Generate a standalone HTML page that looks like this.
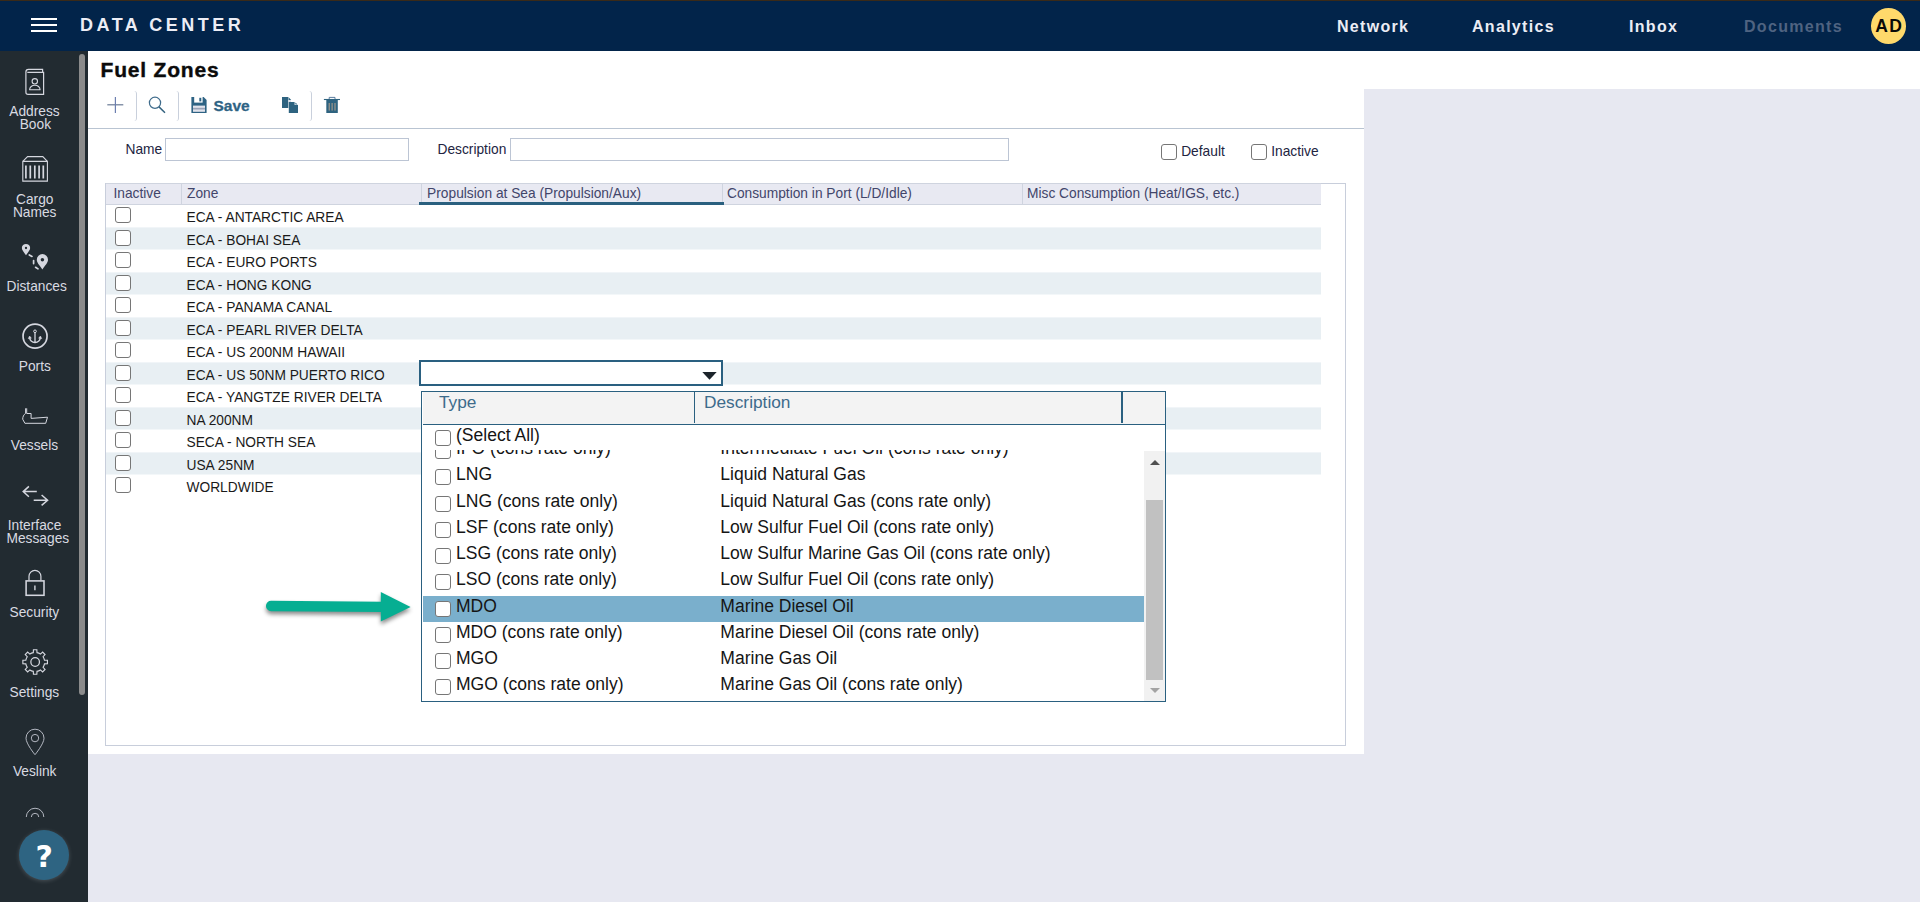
<!DOCTYPE html>
<html lang="en">
<head>
<meta charset="utf-8">
<title>Fuel Zones - Data Center</title>
<style>
*{box-sizing:border-box;margin:0;padding:0}
html,body{width:1920px;height:902px;overflow:hidden}
body{position:relative;background:#e7e8f1;font-family:"Liberation Sans",Arial,sans-serif;font-size:14px;color:#1b1b1b}
.abs{position:absolute}
#topline{left:0;top:0;width:1920px;height:1px;background:#3a2a18}
#topbar{left:0;top:1px;width:1920px;height:50px;background:#02244a}
#burger i{position:absolute;left:31px;width:26px;height:2px;background:#fff;display:block}
#brand{left:80px;top:13px;font-size:18px;font-weight:bold;color:#ecedf5;letter-spacing:3.5px;line-height:22px;white-space:nowrap}
.nav{top:16px;font-size:16px;font-weight:bold;color:#ecedf5;letter-spacing:1.3px;line-height:20px;white-space:nowrap}
#avatar{left:1870.7px;top:6.9px;width:35.6px;height:36.2px;border-radius:50%;background:#ffd96b;color:#0a0a0a;font-size:17.5px;font-weight:bold;text-align:center;line-height:36.6px;letter-spacing:1.3px;padding-left:1.5px}
#sidebar{left:0;top:51px;width:88px;height:851px;background:#222b31;overflow:hidden}
#sbscroll{left:79.2px;top:2.6px;width:5.8px;height:641.4px;border-radius:3px;background:#8b8b8b}
.sbt{color:#d9dae1;font-size:13.75px;line-height:13px;white-space:nowrap}
.sico{position:absolute;overflow:visible}
#white1{left:88px;top:51px;width:1832px;height:38px;background:#fff}
#white2{left:88px;top:88px;width:1276px;height:666px;background:#fff}
#title{left:100.6px;top:57px;font-size:21px;font-weight:bold;color:#0b0b0b;line-height:26px;white-space:nowrap;letter-spacing:0.8px;-webkit-text-stroke:0.4px #0b0b0b}
#tbline{left:88px;top:128px;width:1276px;height:1px;background:#b9c4d2}
.tsep{top:91px;width:5px;height:30px;border-right:1px solid #c9d0dc;border-radius:0 3px 3px 0}
#savetxt{left:213.5px;top:96.1px;font-size:15.5px;font-weight:bold;color:#2e6384;line-height:20px;letter-spacing:0;-webkit-text-stroke:0.3px #2e6384}
.lbl{font-size:13.75px;line-height:18px;color:#22243f;white-space:nowrap}
.inp{height:23px;border:1px solid #bcc5d4;background:#fff}
.cb{position:absolute;width:16px;height:16px;border:1.5px solid #767676;border-radius:3px;background:#fff}
#frame{left:105px;top:183px;width:1241px;height:563px;border:1px solid #c8cedb;background:#fff}
#ghead{left:106px;top:183px;width:1215px;height:22px;background:#e8e9f2;border-top:1px solid #cfd4df;border-bottom:1px solid #cfd4df}
.gh{top:185px;font-size:13.75px;line-height:18px;color:#42456a;white-space:nowrap}
.gsep{top:184px;width:1px;height:20px;background:#cfd4df}
.row{left:106px;width:1215px;height:22.5px}
.row.alt{background:#e8eff3;height:22px}
.zt{left:186.5px;font-size:13.75px;line-height:18px;color:#1a1a1a;white-space:nowrap}
#combo{left:419px;top:360px;width:304px;height:26px;border:2px solid #2a6080;background:#fff}
#pop{left:421px;top:391px;width:745px;height:311px;border:1px solid #2a6080;background:#fff;overflow:hidden}
#phead{left:1px;top:0;width:742px;height:32px;background:#f3f3f3}
#pline{left:1px;top:32px;width:742px;height:1px;background:#2a6080}
.ph{top:-0.3px;font-size:17.3px;line-height:20px;color:#3d6b8b;white-space:nowrap}
.psep{top:0;width:1.5px;height:31px;background:#2a6080}
.pr{left:1px;width:721px;height:26.25px}
.pt{font-size:17.55px;line-height:20px;color:#151515;white-space:nowrap}
#help{left:19px;top:829.7px;width:50.4px;height:50.4px;border-radius:50%;background:#2e6482;color:#fff;font-family:"DejaVu Sans","Liberation Sans",sans-serif;font-size:30px;font-weight:bold;text-align:center;line-height:54px;box-shadow:0 1px 4px rgba(235,240,245,.2)}
</style>
</head>
<body>
<div id="topbar" class="abs">
  <div id="burger"><i style="top:17px"></i><i style="top:23px"></i><i style="top:29px"></i></div>
  <div id="brand" class="abs">DATA CENTER</div>
  <div class="nav abs" style="left:1337px">Network</div>
  <div class="nav abs" style="left:1472px">Analytics</div>
  <div class="nav abs" style="left:1629px">Inbox</div>
  <div class="nav abs" style="left:1744px;color:#4f6381">Documents</div>
  <div id="avatar" class="abs">AD</div>
</div>
<div id="topline" class="abs"></div>

<div id="white1" class="abs"></div>
<div id="white2" class="abs"></div>

<div id="sidebar" class="abs">
  <div id="sbscroll" class="abs"></div>
  <div class="abs" style="left:0;top:0;width:78px;height:766px;overflow:hidden">
<svg class="abs" style="left:0;top:0" width="78" height="800" viewBox="0 51 78 800" fill="none" stroke="#d5d7df" stroke-width="1.1">
<path d="M25.9 72.4V92.2a2.2 2.2 0 0 0 2.2 2.2H43.6V72.4H27.3M25.9 72.6V72a2.6 2.6 0 0 1 2.6 -2.6H42.6V72.2" stroke-width="1.2"/>
<circle cx="34.8" cy="81.3" r="2.7"/><path d="M29.6 89.7a5.25 4.5 0 0 1 10.5 0Z" stroke-linejoin="round"/>
<path d="M22.8 161.4L27.6 156.6H42.8L47.4 161.4M22.8 161.4H47.4V181.1H22.8Z" stroke-width="1.1"/>
<path d="M25.9 165.4V178.5M30.3 165.4V178.5M34.8 165.4V178.5M39.1 165.4V178.5M43.3 165.4V178.5" stroke-width="1.7"/>
<path d="M26 243.9a4.15 4.15 0 0 1 4.15 4.15c0 2.08 -1.74 3.72 -4.15 7.15c-2.41 -3.43 -4.15 -5.07 -4.15 -7.15a4.15 4.15 0 0 1 4.15 -4.15Z" fill="#d5d7df" stroke="none"/><circle cx="26" cy="248" r="1.15" fill="#222b31" stroke="none"/>
<path d="M42.4 254.1a5.6 5.6 0 0 1 5.6 5.6c0 2.80 -2.35 5.04 -5.60 9.70c-3.25 -4.66 -5.6 -6.90 -5.6 -9.70a5.6 5.6 0 0 1 5.6 -5.6Z" fill="#d5d7df" stroke="none"/><circle cx="42.4" cy="259.7" r="1.75" fill="#222b31" stroke="none"/>
<path d="M29.3 254.9L32 256.4M33.6 260.6V263.6M35.6 267.3L38 268.9" stroke-width="1.7" stroke-linecap="round"/>
<circle cx="35.05" cy="336.15" r="12" stroke-width="1.7"/><circle cx="35" cy="331.3" r="1.35" stroke-width="1"/>
<path d="M35 332.8V342.4M29.6 337.3A5.4 5.2 0 0 0 40.4 337.3" stroke-width="1.3"/><path d="M28.3 338.6L29.6 336L31.3 338.2ZM41.7 338.6L40.4 336L38.7 338.2Z" fill="#d5d7df" stroke-width="0.6"/>
<path d="M25.6 408.3V413.4C23.6 414.6 22.7 417 22.7 419.2L24.9 423.3H45.7L47.5 417.2L31.1 418.4V413.5H26.7V408.3" stroke-width="1" stroke-linejoin="round"/>
<path d="M36.8 491.6H23.4M28.9 486.4L23.2 491.6L28.9 496.8M33.7 500.2H47.4M41.6 495L47.6 500.2L41.6 505.4" stroke-width="1.5"/>
<rect x="26.1" y="580.9" width="17.9" height="14.4" stroke-width="1.55"/><path d="M29 580.2V576.3A5.95 5.95 0 0 1 40.9 576.3V580.2" stroke-width="1.2"/><path d="M34.9 585.6V590.3" stroke-width="1.4"/>
<path d="M37.00 652.68L36.85 649.72L33.45 649.72L33.30 652.68A9.5 9.5 0 0 0 29.87 654.10L27.67 652.11L25.26 654.52L27.25 656.72A9.5 9.5 0 0 0 25.83 660.15L22.87 660.30L22.87 663.70L25.83 663.85A9.5 9.5 0 0 0 27.25 667.28L25.26 669.48L27.67 671.89L29.87 669.90A9.5 9.5 0 0 0 33.30 671.32L33.45 674.28L36.85 674.28L37.00 671.32A9.5 9.5 0 0 0 40.43 669.90L42.63 671.89L45.04 669.48L43.05 667.28A9.5 9.5 0 0 0 44.47 663.85L47.43 663.70L47.43 660.30L44.47 660.15A9.5 9.5 0 0 0 43.05 656.72L45.04 654.52L42.63 652.11L40.43 654.10A9.5 9.5 0 0 0 37.00 652.68Z" stroke-width="1.15" stroke-linejoin="miter"/><circle cx="35.15" cy="662" r="4.3" stroke-width="1.25"/>
<path d="M35 729.2a9 9 0 0 1 9 9c0 5.6 -9 16.5 -9 16.5s-9 -10.9 -9 -16.5a9 9 0 0 1 9 -9Z" stroke="#c3c6d0" stroke-width="0.9"/><circle cx="35" cy="738.1" r="3.7" stroke="#c3c6d0" stroke-width="0.9"/>
<circle cx="35.05" cy="817" r="8.75" stroke="#c3c6d0" stroke-width="0.9"/><circle cx="35.05" cy="817" r="3.7" stroke="#c3c6d0" stroke-width="0.9"/>
</svg>
</div>
<div class="sbt abs" style="left:9.3px;top:54.24px">Address</div>
<div class="sbt abs" style="left:19.7px;top:67.14px">Book</div>
<div class="sbt abs" style="left:16.0px;top:142.14px">Cargo</div>
<div class="sbt abs" style="left:12.9px;top:155.04px">Names</div>
<div class="sbt abs" style="left:6.5px;top:229.24px">Distances</div>
<div class="sbt abs" style="left:18.8px;top:309.24px">Ports</div>
<div class="sbt abs" style="left:10.8px;top:387.94px">Vessels</div>
<div class="sbt abs" style="left:7.8px;top:467.94px">Interface</div>
<div class="sbt abs" style="left:6.5px;top:481.24px">Messages</div>
<div class="sbt abs" style="left:9.5px;top:555.04px">Security</div>
<div class="sbt abs" style="left:9.5px;top:635.04px">Settings</div>
<div class="sbt abs" style="left:12.9px;top:714.34px">Veslink</div>
</div>

<div id="title" class="abs">Fuel Zones</div>
<svg class="abs" style="left:107px;top:97px" width="17" height="16" viewBox="0 0 17 16"><path d="M0.3 7.75H16.3" stroke="#8794aa" stroke-width="1.5" fill="none"/><path d="M8.4 0V16" stroke="#6c7fb0" stroke-width="1.2" fill="none"/></svg>
<div class="tsep abs" style="left:132px"></div>
<svg class="abs" style="left:148px;top:96px" width="18" height="18" viewBox="0 0 18 18"><circle cx="7" cy="6.8" r="5.6" fill="none" stroke="#3f6c8c" stroke-width="1.25"/><path d="M11 10.9L17 16.7" stroke="#34627f" stroke-width="1.5" fill="none"/></svg>
<div class="tsep abs" style="left:174px"></div>
<svg class="abs" style="left:191px;top:97px" width="16" height="16" viewBox="0 0 16 16"><path d="M0.4 0H12.6L15.6 3V16H0.4Z" fill="#2e6384"/><rect x="3.2" y="0" width="8.4" height="5.6" fill="#fff"/><rect x="8.3" y="0.8" width="2" height="3.6" fill="#2e6384"/><rect x="2" y="8.6" width="12" height="6.2" fill="#e1e3ec"/><rect x="2" y="10.8" width="12" height="1.7" fill="#9aa3b8"/></svg>
<div id="savetxt" class="abs">Save</div>
<svg class="abs" style="left:282px;top:97px" width="17" height="16" viewBox="0 0 17 16"><path d="M0 0H6.3V11H0Z" fill="#2e6380"/><path d="M6.6 0.2L9.2 3H6.6Z" fill="#2e6380"/><path d="M6.4 3.2H9V5H6.4Z" fill="#d9dde6"/><path d="M6.8 5H12.6V8H16V16H6.8Z" fill="#2e6380"/><path d="M13.4 5.6L15.6 7.6H13.4Z" fill="#2e6380"/></svg>
<div class="tsep abs" style="left:307px"></div>
<svg class="abs" style="left:323px;top:96px" width="18" height="18" viewBox="0 0 18 18"><path d="M0.9 3.5H17" stroke="#2e6380" stroke-width="1.1" fill="none"/><path d="M6.2 3V1.4H12V3" stroke="#4a6f95" stroke-width="0.9" fill="none"/><path d="M3.3 4H14.8V17H3.3Z" fill="#2e6380"/><path d="M6.2 7V14.6M9.1 7V14.6M12 7V14.6" stroke="#c5a98f" stroke-width="0.9" fill="none"/></svg>

<div id="tbline" class="abs"></div>


<div class="lbl abs" style="left:125.5px;top:140.7px">Name</div>
<div class="inp abs" style="left:165px;top:138px;width:244px"></div>
<div class="lbl abs" style="left:437.5px;top:140.7px">Description</div>
<div class="inp abs" style="left:510px;top:138px;width:499px"></div>
<div class="cb" style="left:1161px;top:144px"></div>
<div class="lbl abs" style="left:1181.2px;top:143.2px">Default</div>
<div class="cb" style="left:1251px;top:144px"></div>
<div class="lbl abs" style="left:1271.2px;top:143.2px">Inactive</div>


<div id="frame" class="abs"></div>
<div id="ghead" class="abs"></div>
<svg class="abs" style="left:106px;top:205px" width="1215" height="300" fill="#e8eff3"><rect x="0" y="22.40" width="1215" height="22.1"/><rect x="0" y="67.40" width="1215" height="22.1"/><rect x="0" y="112.40" width="1215" height="22.1"/><rect x="0" y="157.40" width="1215" height="22.1"/><rect x="0" y="202.40" width="1215" height="22.1"/><rect x="0" y="247.40" width="1215" height="22.1"/></svg>
<div class="gh abs" style="left:113.5px">Inactive</div>
<div class="gh abs" style="left:187px">Zone</div>
<div class="gh abs" style="left:427.1px">Propulsion at Sea (Propulsion/Aux)</div>
<div class="gh abs" style="left:727px">Consumption in Port (L/D/Idle)</div>
<div class="gh abs" style="left:1027px">Misc Consumption (Heat/IGS, etc.)</div>
<div class="gsep abs" style="left:181px"></div>
<div class="gsep abs" style="left:421px"></div>
<div class="gsep abs" style="left:722px"></div>
<div class="gsep abs" style="left:1022px"></div>
<div class="abs" style="left:419px;top:202px;width:305px;height:3px;background:#2a607f"></div>
<div class="cb" style="left:115px;top:207.3px"></div>
<div class="zt abs" style="top:209.1px">ECA - ANTARCTIC AREA</div>
<div class="cb" style="left:115px;top:229.8px"></div>
<div class="zt abs" style="top:231.6px">ECA - BOHAI SEA</div>
<div class="cb" style="left:115px;top:252.3px"></div>
<div class="zt abs" style="top:254.1px">ECA - EURO PORTS</div>
<div class="cb" style="left:115px;top:274.8px"></div>
<div class="zt abs" style="top:276.6px">ECA - HONG KONG</div>
<div class="cb" style="left:115px;top:297.3px"></div>
<div class="zt abs" style="top:299.1px">ECA - PANAMA CANAL</div>
<div class="cb" style="left:115px;top:319.8px"></div>
<div class="zt abs" style="top:321.6px">ECA - PEARL RIVER DELTA</div>
<div class="cb" style="left:115px;top:342.3px"></div>
<div class="zt abs" style="top:344.1px">ECA - US 200NM HAWAII</div>
<div class="cb" style="left:115px;top:364.8px"></div>
<div class="zt abs" style="top:366.6px">ECA - US 50NM PUERTO RICO</div>
<div class="cb" style="left:115px;top:387.3px"></div>
<div class="zt abs" style="top:389.1px">ECA - YANGTZE RIVER DELTA</div>
<div class="cb" style="left:115px;top:409.8px"></div>
<div class="zt abs" style="top:411.6px">NA 200NM</div>
<div class="cb" style="left:115px;top:432.3px"></div>
<div class="zt abs" style="top:434.1px">SECA - NORTH SEA</div>
<div class="cb" style="left:115px;top:454.8px"></div>
<div class="zt abs" style="top:456.6px">USA 25NM</div>
<div class="cb" style="left:115px;top:477.3px"></div>
<div class="zt abs" style="top:479.1px">WORLDWIDE</div>
<div id="combo" class="abs"><svg class="abs" style="left:280.6px;top:9.8px" width="15" height="8" viewBox="0 0 15 8"><path d="M0.3 0H14.7L7.5 7.8Z" fill="#1c242b"/></svg></div>

<div id="pop" class="abs">
<div id="phead" class="abs"></div><div id="pline" class="abs"></div>
<div class="ph abs" style="left:17px">Type</div>
<div class="ph abs" style="left:282px">Description</div>
<div class="psep abs" style="left:272px;width:1px"></div><div class="psep abs" style="left:699px;width:2px"></div>
<div class="cb" style="left:13px;top:37.7px"></div>
<div class="pt abs" style="left:34px;top:32.5px">(Select All)</div>
<div class="abs" style="left:0;top:58px;width:743px;height:252px;overflow:hidden">
<div class="cb" style="left:13px;top:-7.00px"></div>
<div class="pt abs" style="left:34px;top:-12.00px">IFO (cons rate only)</div>
<div class="pt abs" style="left:298.3px;top:-12.00px">Intermediate Fuel Oil (cons rate only)</div>
<div class="cb" style="left:13px;top:19.25px"></div>
<div class="pt abs" style="left:34px;top:14.25px">LNG</div>
<div class="pt abs" style="left:298.3px;top:14.25px">Liquid Natural Gas</div>
<div class="cb" style="left:13px;top:45.50px"></div>
<div class="pt abs" style="left:34px;top:40.50px">LNG (cons rate only)</div>
<div class="pt abs" style="left:298.3px;top:40.50px">Liquid Natural Gas (cons rate only)</div>
<div class="cb" style="left:13px;top:71.75px"></div>
<div class="pt abs" style="left:34px;top:66.75px">LSF (cons rate only)</div>
<div class="pt abs" style="left:298.3px;top:66.75px">Low Sulfur Fuel Oil (cons rate only)</div>
<div class="cb" style="left:13px;top:98.00px"></div>
<div class="pt abs" style="left:34px;top:93.00px">LSG (cons rate only)</div>
<div class="pt abs" style="left:298.3px;top:93.00px">Low Sulfur Marine Gas Oil (cons rate only)</div>
<div class="cb" style="left:13px;top:124.25px"></div>
<div class="pt abs" style="left:34px;top:119.25px">LSO (cons rate only)</div>
<div class="pt abs" style="left:298.3px;top:119.25px">Low Sulfur Fuel Oil (cons rate only)</div>
<div class="pr abs" style="top:146.30px;background:#7aafcc;height:26px"></div>
<div class="cb" style="left:13px;top:150.50px"></div>
<div class="pt abs" style="left:34px;top:145.50px">MDO</div>
<div class="pt abs" style="left:298.3px;top:145.50px">Marine Diesel Oil</div>
<div class="cb" style="left:13px;top:176.75px"></div>
<div class="pt abs" style="left:34px;top:171.75px">MDO (cons rate only)</div>
<div class="pt abs" style="left:298.3px;top:171.75px">Marine Diesel Oil (cons rate only)</div>
<div class="cb" style="left:13px;top:203.00px"></div>
<div class="pt abs" style="left:34px;top:198.00px">MGO</div>
<div class="pt abs" style="left:298.3px;top:198.00px">Marine Gas Oil</div>
<div class="cb" style="left:13px;top:229.25px"></div>
<div class="pt abs" style="left:34px;top:224.25px">MGO (cons rate only)</div>
<div class="pt abs" style="left:298.3px;top:224.25px">Marine Gas Oil (cons rate only)</div>
<div class="abs" style="left:722px;top:1px;width:21px;height:251px;background:#f1f1f1"></div>
<div class="abs" style="left:724px;top:50px;width:17px;height:180px;background:#c1c1c1"></div>
<svg class="abs" style="left:727.5px;top:10px" width="10" height="5" viewBox="0 0 10 5"><path d="M0 5L5 0L10 5Z" fill="#505050"/></svg>
<svg class="abs" style="left:727.5px;top:237.5px" width="10" height="5" viewBox="0 0 10 5"><path d="M0 0L5 5L10 0Z" fill="#a3a3a3"/></svg>
</div></div>

<svg class="abs" style="left:255px;top:580px;filter:drop-shadow(0 3px 2.2px rgba(0,0,0,.45))" width="170" height="56" viewBox="255 580 170 56">
<path d="M271.1 606L382 606.9" stroke="#06ae92" stroke-width="10.3" stroke-linecap="round" fill="none"/>
<path d="M380.8 591.9L410.6 606.9L380.8 621.6Z" fill="#06ae92"/>
</svg>


<div id="help" class="abs">?</div>
</body>
</html>
